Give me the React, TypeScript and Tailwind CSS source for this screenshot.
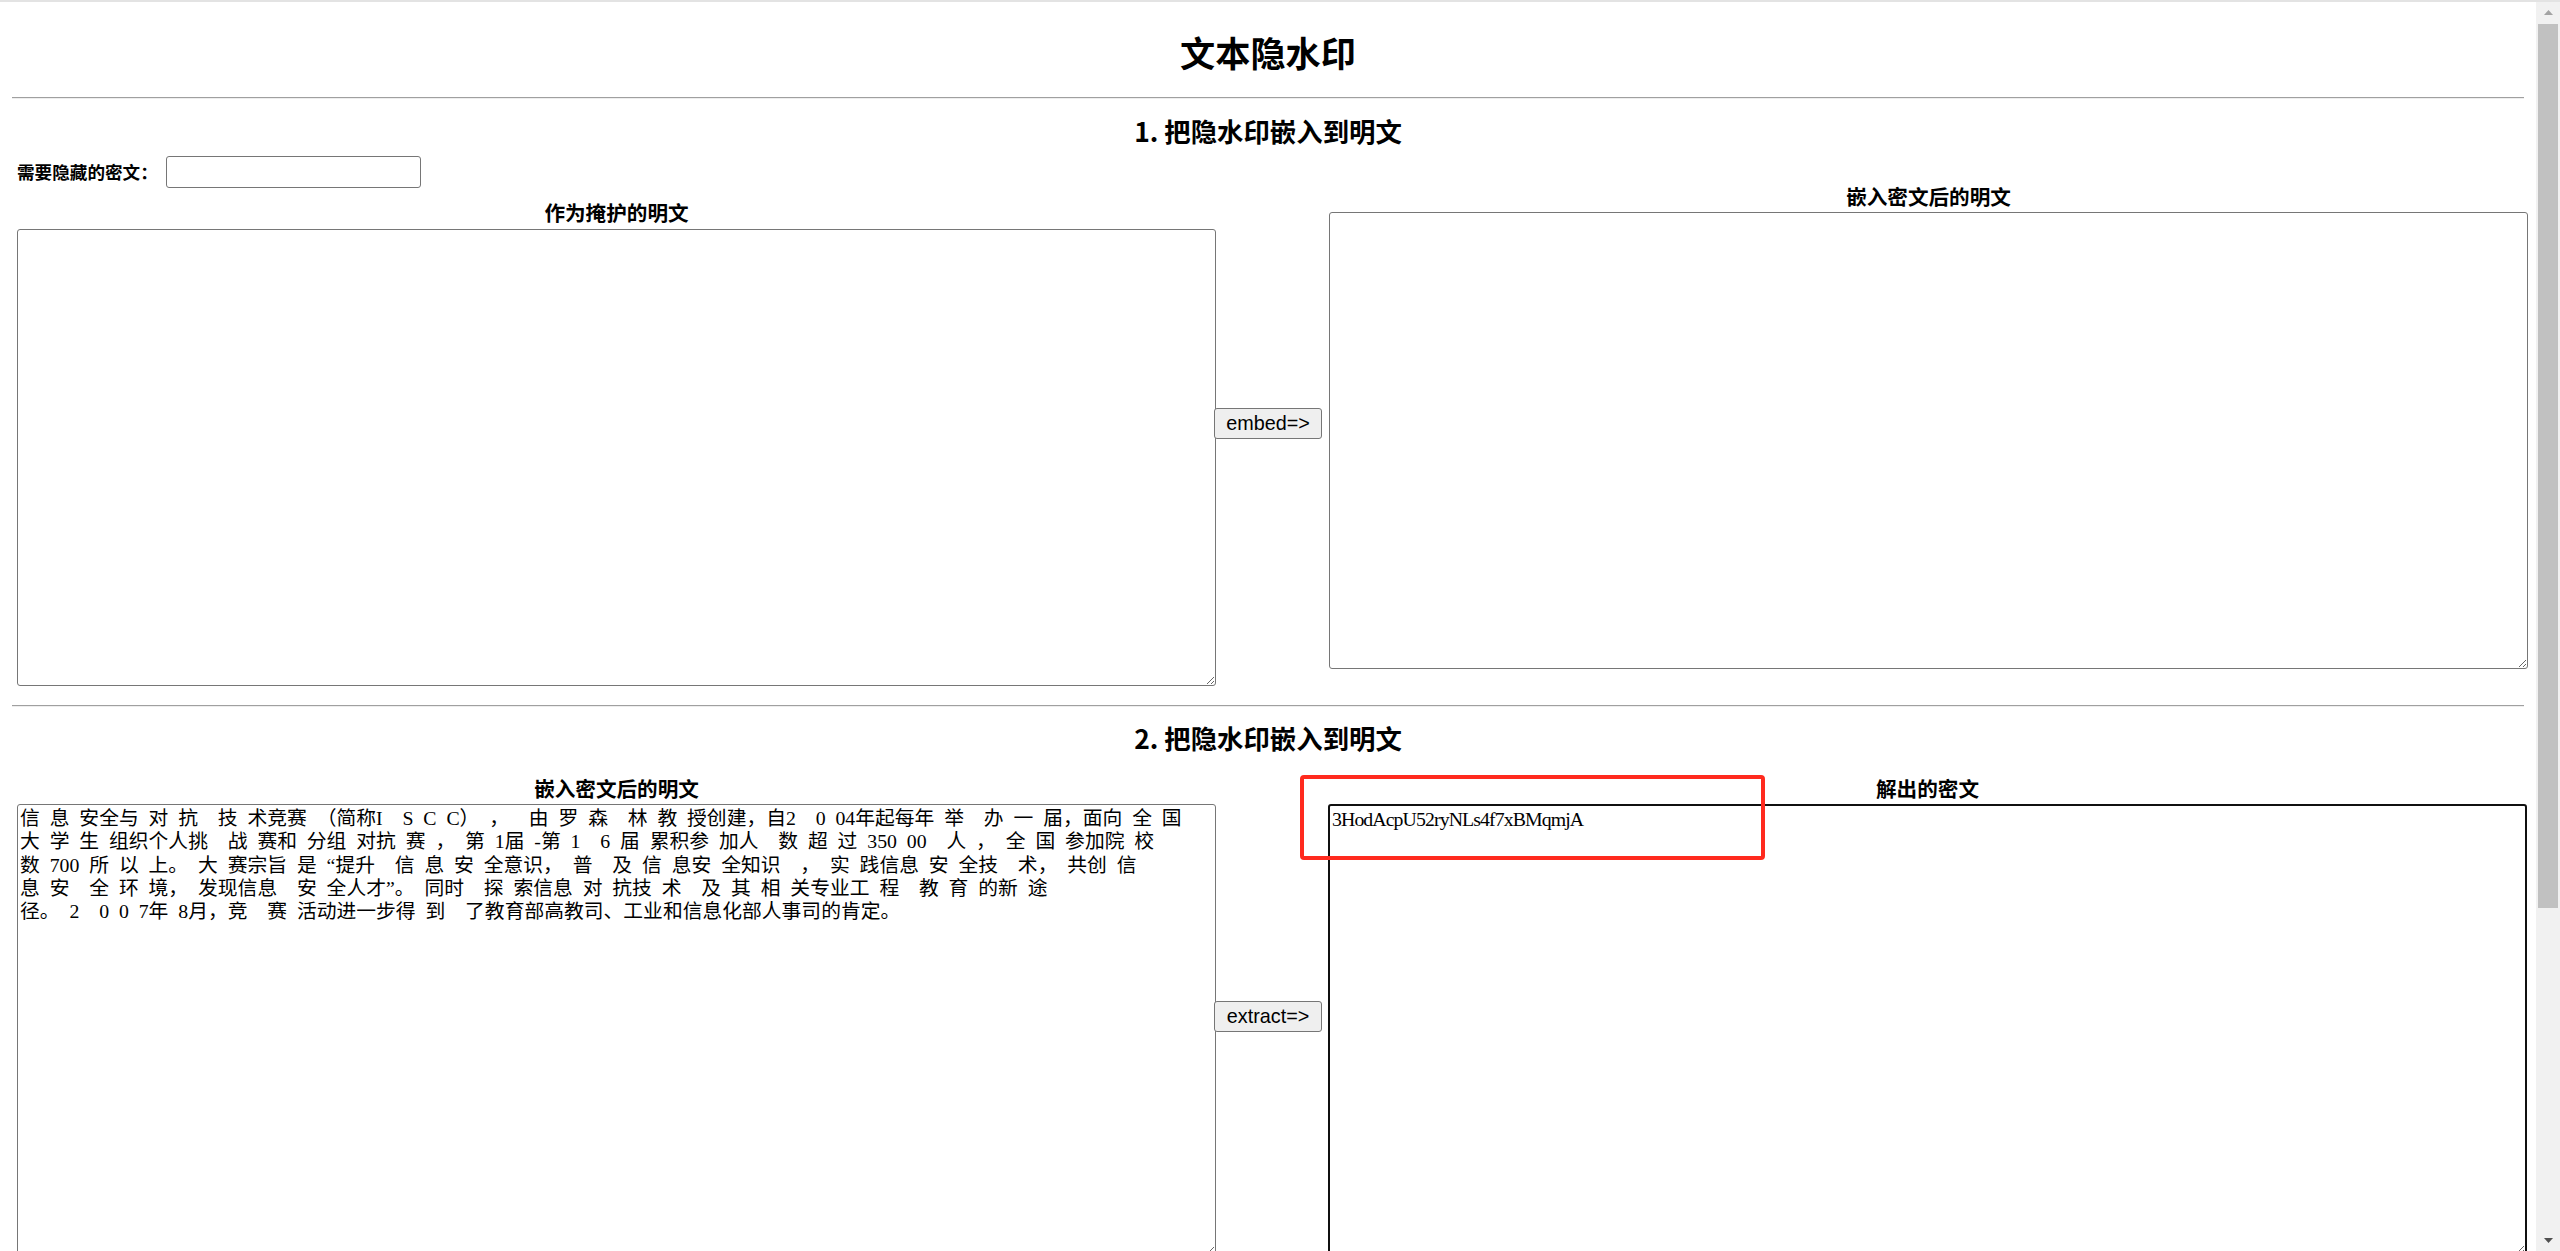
const COVER_LINES = [
  "信 息 安全与 对 抗  技 术竞赛 （简称I  S C C） ，  由 罗 森  林 教 授创建，自2  0 04年起每年 举  办 一 届，面向 全 国",
  "大 学 生 组织个人挑  战 赛和 分组 对抗 赛 ， 第 1届 -第 1  6 届 累积参 加人  数 超 过 350 00  人 ， 全 国 参加院 校",
  "数 700 所 以 上。 大 赛宗旨 是 “提升  信 息 安 全意识， 普  及 信 息安 全知识  ， 实 践信息 安 全技  术， 共创 信",
  "息 安  全 环 境， 发现信息  安 全人才”。 同时  探 索信息 对 抗技 术  及 其 相 关专业工 程  教 育 的新 途",
  "径。 2  0 0 7年 8月，竞  赛 活动进一步得 到  了教育部高教司、工业和信息化部人事司的肯定。",
];

// the watermark text uses wide spaces, en space keeps the spacing close
const embeddedText = COVER_LINES.map(l => l.replace(/ /g, "\u2002")).join("\n");

const areaBase =
  "block w-[1199px] bg-white rounded-[3px] p-[2px] resize text-[19.8px] leading-[23.3px] text-black font-['Liberation_Serif','Noto_Sans_CJK_SC',serif] outline-none";

function ActionButton({ label }: { label: string }) {
  return (
    <button className="w-[108px] h-[31px] shrink-0 ml-[-2px] bg-[#efefef] border border-[#767676] rounded-[3px] text-[19.8px] leading-none text-black font-['Liberation_Sans',Arial,sans-serif]">
      {label}
    </button>
  );
}

function ColumnLabel({ text }: { text: string }) {
  return <div className="h-[24px] leading-[24px] text-center text-[20.6px] font-bold text-black">{text}</div>;
}

function Scrollbar() {
  return (
    <div className="w-[24px] shrink-0 bg-[#f1f1f1] flex flex-col">
      <div className="h-[20px] flex items-center justify-center">
        <svg width="9" height="5" viewBox="0 0 9 5">
          <polygon points="4.5,0 9,5 0,5" fill="#a3a3a3" />
        </svg>
      </div>
      <div className="mt-[2px] mx-[2px] h-[884px] bg-[#c1c1c1]" />
      <div className="flex-1" />
      <div className="h-[22px] flex items-center justify-center">
        <svg width="9" height="5" viewBox="0 0 9 5">
          <polygon points="0,0 9,0 4.5,5" fill="#505050" />
        </svg>
      </div>
    </div>
  );
}

export default function App() {
  return (
    <div className="h-[1251px] w-full overflow-hidden bg-white flex flex-col font-['Noto_Sans_CJK_SC',sans-serif] text-black">
      <div className="h-[2px] shrink-0 bg-[#e3e3e3]" />
      <div className="flex flex-1 min-h-0">
        <main className="flex-1 min-w-0 overflow-hidden">
          <h1 className="mt-[28px] h-[44px] leading-[44px] text-center text-[35.2px] font-bold">文本隐水印</h1>
          <hr className="mx-[12px] mt-[23px] border-t border-t-[#a0a0a0] border-b border-b-[#eeeeee]" />

          <h2 className="mt-[15px] h-[34px] leading-[34px] text-center text-[26.4px] font-bold">1. 把隐水印嵌入到明文</h2>

          <section className="mt-[8px] pl-[17px] flex items-start">
            <div className="w-[1199px] shrink-0">
              <div className="h-[32px] flex items-center">
                <span className="text-[17.6px] font-bold">需要隐藏的密文：</span>
                <input className="ml-[8px] w-[255px] h-[32px] bg-white border border-[#767676] rounded-[3px] px-[2px] text-[17.6px] outline-none" />
              </div>
              <div className="mt-[12px]">
                <ColumnLabel text="作为掩护的明文" />
              </div>
              <textarea className={`${areaBase} mt-[5px] h-[457px] border border-[#767676]`} />
            </div>
            <div className="mt-[252px]">
              <ActionButton label="embed=>" />
            </div>
            <div className="ml-[7px] mt-[28px] w-[1199px] shrink-0">
              <ColumnLabel text="嵌入密文后的明文" />
              <textarea className={`${areaBase} mt-[4px] h-[457px] border border-[#767676]`} />
            </div>
          </section>

          <hr className="mx-[12px] mt-[19px] border-t border-t-[#a0a0a0] border-b border-b-[#eeeeee]" />

          <h2 className="mt-[14px] h-[34px] leading-[34px] text-center text-[26.4px] font-bold">2. 把隐水印嵌入到明文</h2>

          <section className="mt-[21px] pl-[17px] flex items-start">
            <div className="w-[1199px] shrink-0">
              <ColumnLabel text="嵌入密文后的明文" />
              <textarea
                className={`${areaBase} mt-[4px] h-[452px] border border-[#767676]`}
                defaultValue={embeddedText}
                readOnly
              />
            </div>
            <div className="mt-[225px]">
              <ActionButton label="extract=>" />
            </div>
            <div className="relative ml-[6px] w-[1199px] shrink-0">
              <ColumnLabel text="解出的密文" />
              <textarea
                className={`${areaBase} mt-[4px] h-[452px] border-2 border-[#101010] pl-[2px] pt-[2px] tracking-[-0.9px]`}
                defaultValue="3HodAcpU52ryNLs4f7xBMqmjA"
                readOnly
              />
              {/* red highlight drawn over the screenshot */}
              <div className="absolute left-[-28px] top-[-1px] w-[465px] h-[85px] border-[4px] border-[#ff2a1e] rounded-[4px] pointer-events-none" />
            </div>
          </section>
        </main>
        <Scrollbar />
      </div>
    </div>
  );
}
